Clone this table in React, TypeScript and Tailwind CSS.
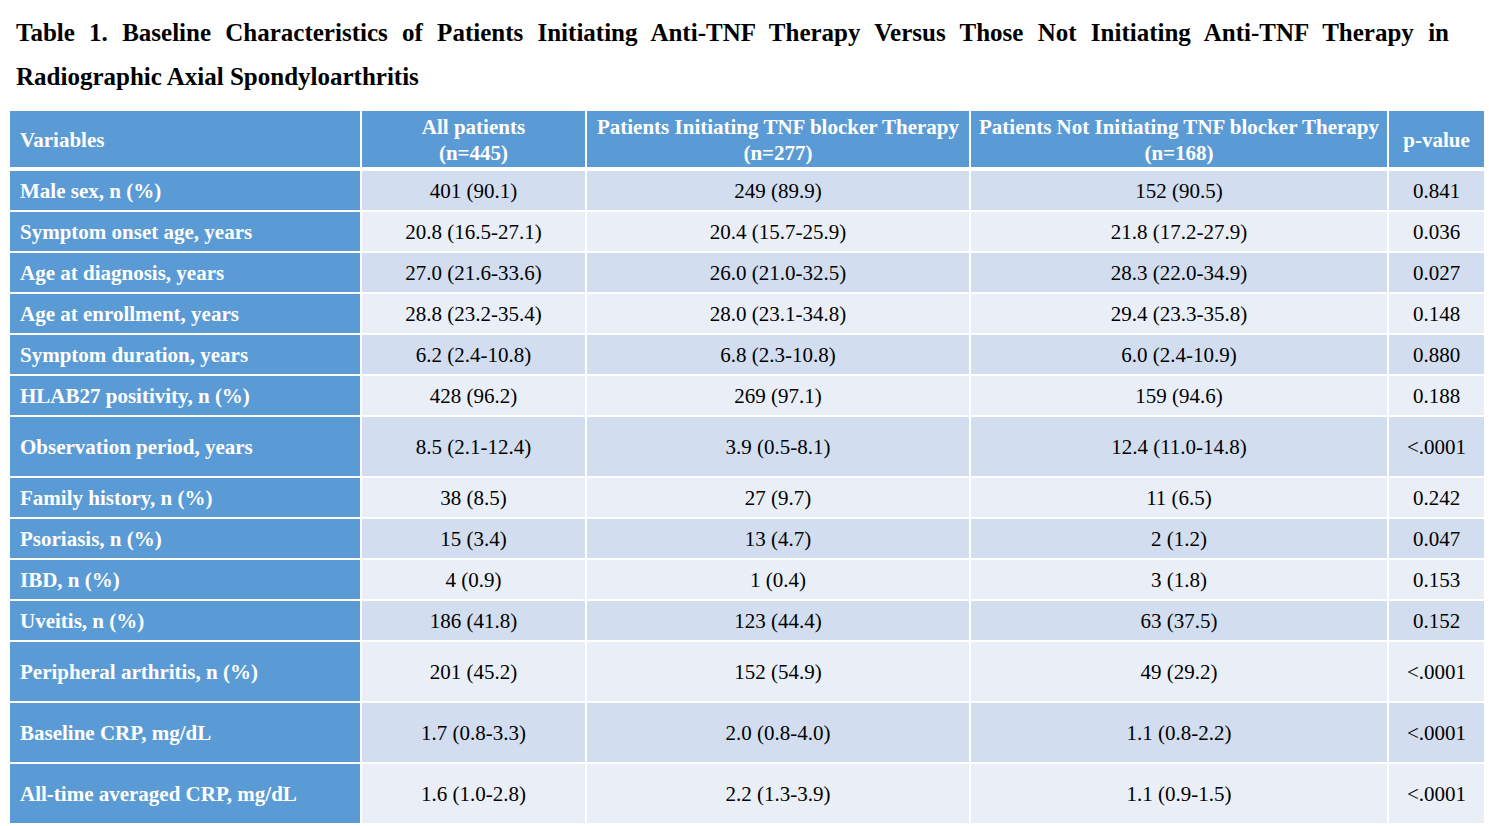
const rows = [
  { label: "Male sex, n (%)", all: "401 (90.1)", init: "249 (89.9)", not: "152 (90.5)", p: "0.841" },
  { label: "Symptom onset age, years", all: "20.8 (16.5-27.1)", init: "20.4 (15.7-25.9)", not: "21.8 (17.2-27.9)", p: "0.036" },
  { label: "Age at diagnosis, years", all: "27.0 (21.6-33.6)", init: "26.0 (21.0-32.5)", not: "28.3 (22.0-34.9)", p: "0.027" },
  { label: "Age at enrollment, years", all: "28.8 (23.2-35.4)", init: "28.0 (23.1-34.8)", not: "29.4 (23.3-35.8)", p: "0.148" },
  { label: "Symptom duration, years", all: "6.2 (2.4-10.8)", init: "6.8 (2.3-10.8)", not: "6.0 (2.4-10.9)", p: "0.880" },
  { label: "HLAB27 positivity, n (%)", all: "428 (96.2)", init: "269 (97.1)", not: "159 (94.6)", p: "0.188" },
  { label: "Observation period, years", all: "8.5 (2.1-12.4)", init: "3.9 (0.5-8.1)", not: "12.4 (11.0-14.8)", p: "<.0001", tall: true },
  { label: "Family history, n (%)", all: "38 (8.5)", init: "27 (9.7)", not: "11 (6.5)", p: "0.242" },
  { label: "Psoriasis, n (%)", all: "15 (3.4)", init: "13 (4.7)", not: "2 (1.2)", p: "0.047" },
  { label: "IBD, n (%)", all: "4 (0.9)", init: "1 (0.4)", not: "3 (1.8)", p: "0.153" },
  { label: "Uveitis, n (%)", all: "186 (41.8)", init: "123 (44.4)", not: "63 (37.5)", p: "0.152" },
  { label: "Peripheral arthritis, n (%)", all: "201 (45.2)", init: "152 (54.9)", not: "49 (29.2)", p: "<.0001", tall: true },
  { label: "Baseline CRP, mg/dL", all: "1.7 (0.8-3.3)", init: "2.0 (0.8-4.0)", not: "1.1 (0.8-2.2)", p: "<.0001", tall: true },
  { label: "All-time averaged CRP, mg/dL", all: "1.6 (1.0-2.8)", init: "2.2 (1.3-3.9)", not: "1.1 (0.9-1.5)", p: "<.0001", tall: true },
];

const cols = "grid grid-cols-[350px_223px_382px_416px_95px] gap-x-[2px]";

export default function App() {
  return (
    <div className="min-h-[826px] bg-white font-['Liberation_Serif','Times_New_Roman',serif] text-black">
      {/* title: first line stretched edge to edge like the source doc */}
      <div className="pt-[11px] pl-[16px] w-[1449px] text-[25px] leading-[44px] font-bold">
        <span className="block text-justify [text-align-last:justify]">
          Table 1. Baseline Characteristics of Patients Initiating Anti-TNF Therapy Versus Those Not Initiating Anti-TNF
          Therapy in
        </span>
        <span className="block">Radiographic Axial Spondyloarthritis</span>
      </div>

      <div className="ml-[10px] mt-[12px] w-[1474px]">
        <div className={`${cols} h-[56px] text-white font-bold text-[21px] leading-[26px]`}>
          <div className="bg-[#5b9bd5] flex items-center pl-[10px] pt-[1px]">Variables</div>
          <div className="bg-[#5b9bd5] flex flex-col items-center justify-center pt-[1px]">
            <span>All patients</span>
            <span>(n=445)</span>
          </div>
          <div className="bg-[#5b9bd5] flex flex-col items-center justify-center pt-[1px]">
            <span>Patients Initiating TNF blocker Therapy</span>
            <span>(n=277)</span>
          </div>
          <div className="bg-[#5b9bd5] flex flex-col items-center justify-center pt-[1px]">
            <span>Patients Not Initiating TNF blocker Therapy</span>
            <span>(n=168)</span>
          </div>
          <div className="bg-[#5b9bd5] flex items-center justify-center pt-[1px]">p-value</div>
        </div>

        <div className="mt-[4px] flex flex-col gap-y-[2px] text-[21px]">
          {rows.map((r, i) => {
            const band = i % 2 === 0 ? "bg-[#d2deef]" : "bg-[#eaeff7]";
            return (
              <div key={r.label} className={`${cols} ${r.tall ? "h-[59px]" : "h-[39px]"}`}>
                <div className="bg-[#5b9bd5] text-white font-bold flex items-center pl-[10px] pt-[2px]">{r.label}</div>
                <div className={`${band} flex items-center justify-center pt-[2px]`}>{r.all}</div>
                <div className={`${band} flex items-center justify-center pt-[2px]`}>{r.init}</div>
                <div className={`${band} flex items-center justify-center pt-[2px]`}>{r.not}</div>
                <div className={`${band} flex items-center justify-center pt-[2px]`}>{r.p}</div>
              </div>
            );
          })}
        </div>
      </div>
    </div>
  );
}
